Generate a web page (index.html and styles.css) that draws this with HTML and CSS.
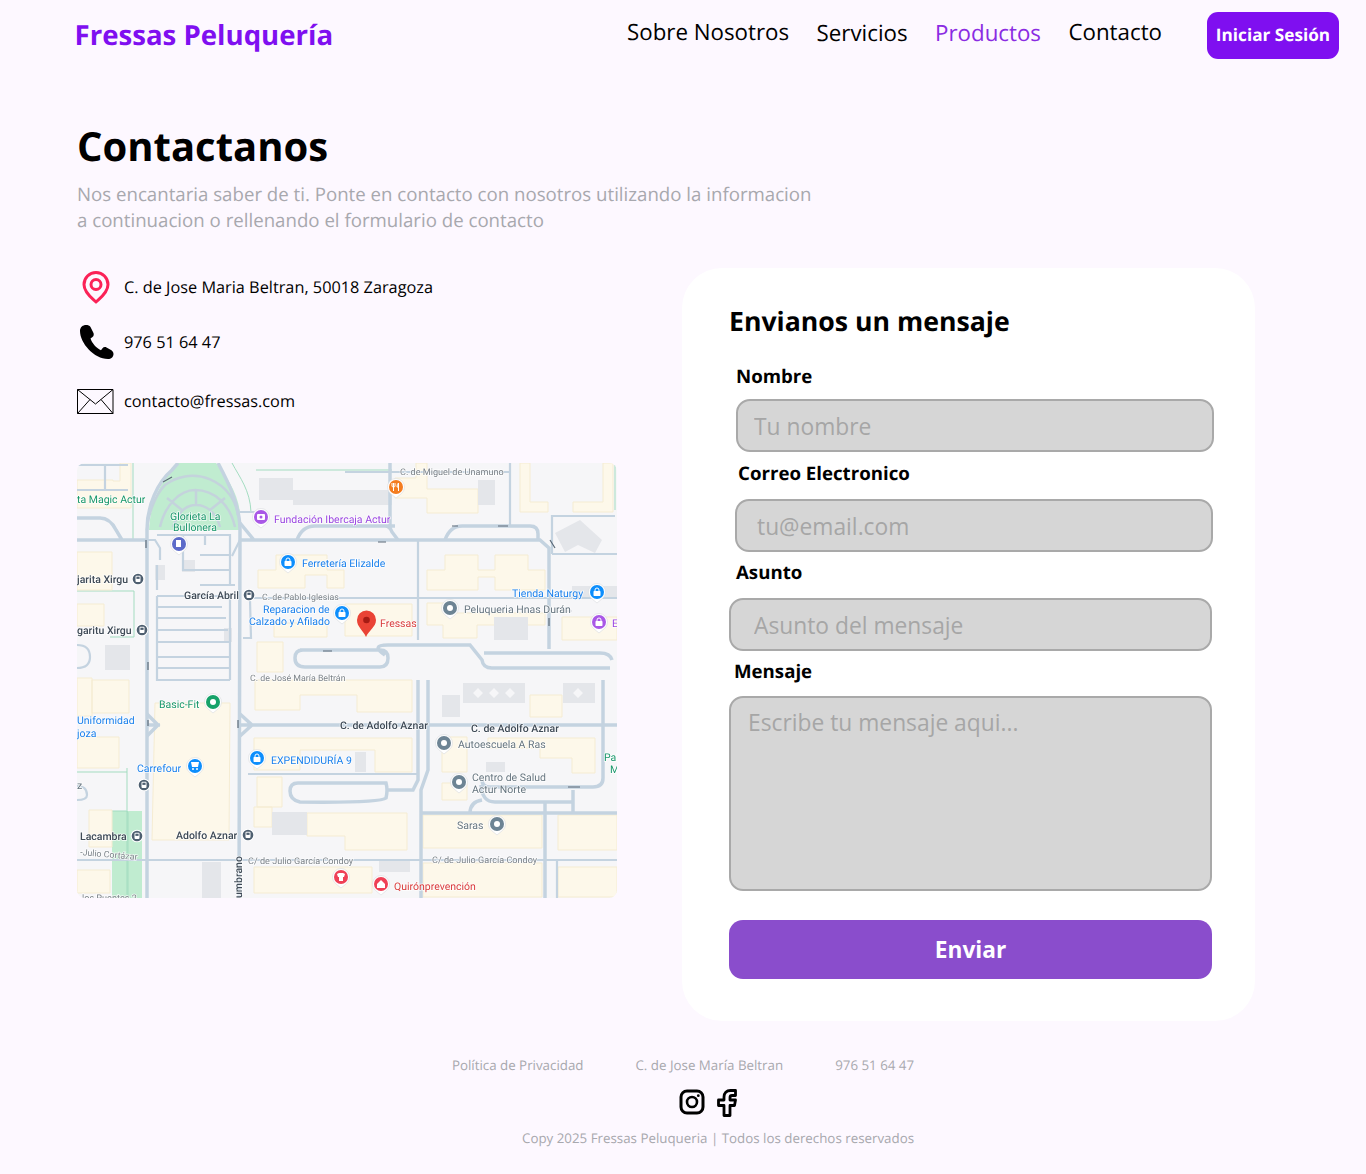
FILE: index.html
```html
<!DOCTYPE html>
<html lang="es">
<head>
    <meta charset="UTF-8">
    <meta name="viewport" content="width=device-width, initial-scale=1.0">
    <title>Fressas Peluquería</title>
    <link rel="stylesheet" href="styles.css">
</head>
<body>
    <header class="header">
        <a class="logo" href="#">Fressas Peluquería</a>
        <nav class="nav">
            <a href="#">Sobre Nosotros</a>
            <a class="nav-low" href="#">Servicios</a>
            <a class="nav-low active" href="#">Productos</a>
            <a href="#">Contacto</a>
        </nav>
        <a class="login" href="#">Iniciar Sesión</a>
    </header>

    <main class="main">
        <h1>Contactanos</h1>
        <p class="intro">Nos encantaria saber de ti. Ponte en contacto con nosotros utilizando la informacion<br>a continuacion o rellenando el formulario de contacto</p>

        <div class="columns">
            <section class="info">
                <ul class="contact-list">
                    <li class="row-address">
                        <span class="contact-icon">
                            <svg width="30" height="33" viewBox="0 0 30 33"><path d="M15 31 C12 28 3 22 3 13.5 A12 12 0 0 1 27 13.5 C27 22 18 28 15 31 Z" fill="none" stroke="#fb2257" stroke-width="3" stroke-linejoin="round"/><circle cx="15" cy="13.5" r="5" fill="none" stroke="#fb2257" stroke-width="3"/></svg>
                        </span>
                        C. de Jose Maria Beltran, 50018 Zaragoza
                    </li>
                    <li class="row-phone">
                        <span class="contact-icon">
                            <svg width="36" height="36" viewBox="0 0 36 36"><path d="M8 1 C5 1 2 3 2 7 C2 19 16 35 30 35 C33 35 35.500 33 35.500 30 C35.500 28 34.500 27 33 26 L28.500 23.500 C27 22.700 25.500 23 24.500 24.300 L23 26.300 C18 24 14 19 12.500 14.500 L14.500 13 C15.800 12 16 10.500 15.500 9 L12.500 3 C11.500 1.500 10 1 8 1 Z" fill="#000"/></svg>
                        </span>
                        976 51 64 47
                    </li>
                    <li class="row-mail">
                        <span class="contact-icon">
                            <svg width="37" height="25" viewBox="0 0 37 25"><path d="M.5 .5 H36 V24.500 H.5 Z M.5 .5 L18.500 15 L36 .5 M.5 24.500 L13 10.500 M36 24.500 L24 10.500" fill="none" stroke="#000" stroke-width="1"/></svg>
                        </span>
                        contacto@fressas.com
                    </li>
                </ul>

                <svg class="map" width="540" height="435" viewBox="77 463 540 435">
                    <defs>
                        <g id="pin">
                            <path d="M0 11 L-5.500 6.500 A8.500 8.500 0 1 1 5.500 6.500 Z" fill="#fff" stroke="#d8dade" stroke-width=".6"/>
                            <circle r="7"/>
                        </g>
                        <g id="lock">
                            <rect x="-3.500" y="-1" width="7" height="5" rx=".8" fill="#fff"/>
                            <path d="M-2 -1 V-2 A2 2 0 0 1 2 -2 V-1" fill="none" stroke="#fff" stroke-width="1"/>
                        </g>
                        <g id="bus">
                            <circle r="6.300" fill="#fff"/>
                            <circle r="5.300" fill="#4e5f70"/>
                            <rect x="-2.500" y="-3.300" width="5" height="6.300" rx="1" fill="#fff"/>
                            <rect x="-1.600" y="-2.300" width="3.200" height="2.200" fill="#4e5f70"/>
                        </g>
                    </defs>

                    <rect x="77" y="463" width="540" height="435" fill="#f6f6f8"/>

                    <!-- parque -->
                    <path class="green" d="M149 530 C150 505 160 482 172 471 L178 463 H216 C225 475 237 490 240 512 V530 Z"/>
                    <path class="green" d="M112 811 H142 V898 H112 Z"/>
                    <path class="park-line" d="M147 530 C148 515 155 495 165 485 A46 46 0 0 1 238 515 M160 527 C165 505 180 490 195 490 C215 490 230 505 235 527 M173 527 C178 512 186 505 196 505 C206 505 216 512 220 527 M196 490 V505 M167 498 L182 510 M225 498 L210 510"/>
                    <path class="green-line" d="M133 463 V540 M77 591 H134 V637 H110 M232 463 C240 478 250 490 251 512 M256 470 H392 M615 463 V510 M112 811 H126 Q128 811 128 813 V898 M127 768 V895 M77 772 H127"/>

                    <!-- edificios -->
                    <path class="bld" d="M77 480 H113 V481 H120 V463 H131 V508 H77 Z"/>
                    <path class="bld" d="M77 552 H112 V590 H77 Z M77 604 H104 V626 H77 Z"/>
                    <path class="bld" d="M92 680 H129 V713 H92 Z M77 737 H119 V768 H77 Z M77 678 H92 V716 H77 Z"/>
                    <path class="bld" d="M89 810 H112 V847 H89 Z M77 870 H110 V893 H77 Z"/>
                    <path class="bld" d="M155 703 H230 L229 840 H152 Z"/>
                    <path class="bld" d="M258 570 H276 V555 H327 V570 H344 V588 H327 V575 H305 V588 H258 Z"/>
                    <path class="bld" d="M274 623 H327 V637 H274 Z M257 642 H283 V672 H257 Z"/>
                    <path class="bld" d="M345 604 H412 V636 H345 Z"/>
                    <path class="bld" d="M255 680 H412 V712 H357 V695 H300 V710 H255 Z"/>
                    <path class="bld" d="M254 738 H412 V772 H375 V750 H300 V770 H254 Z"/>
                    <path class="bld" d="M257 777 H282 V807 H257 Z M254 807 H272 V827 H254 Z M307 813 H407 V850 H345 V836 H307 Z"/>
                    <path class="bld" d="M254 867 H372 V893 H254 Z M423 815 H455 V815 H542 V848 H423 Z M558 815 H617 V850 H558 Z M423 863 H542 V897 H423 Z M558 867 H617 V897 H558 Z"/>
                    <path class="bld" d="M427 570 H445 V555 H478 V570 H495 V555 H528 V570 H545 V590 H495 V577 H478 V590 H427 Z"/>
                    <path class="bld" d="M427 603 H445 V613 H545 V625 H477 V638 H443 V625 H427 Z M562 617 H617 V640 H562 Z"/>
                    <path class="bld" d="M395 478 H416 V463 H427 V489 H478 V513 H427 V498 H395 Z"/>
                    <path class="bld" d="M520 463 H530 V502 H548 V512 H520 Z M603 463 H613 V512 H573 V502 H603 Z"/>
                    <path class="bld" d="M442 737 H467 V772 H442 Z M442 783 H467 V800 H442 Z M488 738 H595 V773 H572 V758 H540 V748 H488 Z"/>
                    <path class="bld" d="M530 695 H562 V717 H530 Z"/>

                    <!-- bloques grises -->
                    <path class="gray" d="M259 478 H293 V500 H259 Z M293 490 H392 V505 H293 Z M478 480 H495 V505 H478 Z"/>
                    <path class="gray" d="M555 533 L580 520 L602 540 L595 553 L578 545 L565 552 Z"/>
                    <path class="gray" d="M494 617 H528 V640 H494 Z M105 645 H130 V670 H105 Z M560 610 H572 V586 H617 V598 H572 V612 H560 Z"/>
                    <path class="gray" d="M463 683 H525 V703 H463 Z M563 683 H595 V703 H563 Z M442 695 H460 V717 H442 Z"/>
                    <path class="gray" d="M272 812 H307 V835 H272 Z M202 862 H221 V898 H202 Z M379 860 H410 V872 H379 Z M355 752 H366 V772 H355 Z"/>
                    <path class="gray" d="M486 762 H505 V772 H486 Z"/>
                    <path class="gray" d="M155 565 H165 V580 H155 Z M182 560 H195 V572 H182 Z M224 628 H232 V642 H224 Z"/>
                    <path d="M478 688 L483 693 L478 698 L473 693 Z M494 688 L499 693 L494 698 L489 693 Z M510 688 L515 693 L510 698 L505 693 Z M578 688 L583 693 L578 698 L573 693 Z" fill="#f6f6f8"/>

                    <!-- calles -->
                    <path class="road" d="M147 898 V530 C147 505 158 482 172 470 L178 463 M239 898 L240 530 C240 505 228 482 218 463"/>
                    <path class="road" d="M77 540 H147 M240 540 H540 L549 548 V649 M240 523 L254 540 M77 518 H100 Q110 518 116 530 L122 540"/>
                    <path class="road" d="M297 540 Q302 526 315 526 H385 Q390 526 392 532 L398 540 M390 463 V526 M385 526 L395 526 M445 540 Q450 526 462 526 H530 Q538 526 538 534 V540"/>
                    <path class="road" d="M147 725 L160 725 M240 725 L252 725 H617 M147 714 L158 725 L147 736 M240 714 L252 725 L240 736"/>
                    <path class="road" d="M300 650 H380 Q388 650 388 658 Q388 667 380 667 H305 Q295 667 295 658 Q295 650 303 650 Z M388 645 H470 L482 660 Q483 668 492 668 H610 M484 653 H600 Q610 653 612 660 M388 645 Q370 645 385 655"/>
                    <path class="road" d="M290 791 Q290 783 298 783 H386 Q388 790 386 798 Q380 803 300 802 Q290 800 290 791 Z M388 790 H413 L418 780 V680 M428 680 V770 L421 790 V898 M421 813 H617"/>
                    <path class="road" d="M603 680 V778 Q603 787 593 787 H490 Q482 787 482 780 M481 785 Q482 802 495 802 H573 V813 M573 790 V802 M470 813 Q470 802 482 800 M545 802 V898"/>
                    <path class="road-thin" d="M510 463 V526 M345 472 H510 M552 554 V516 H615 M552 554 H617 M418 541 V640 M254 598 H617 M557 860 V898"/>
                    <path class="road-thin" d="M77 860 H617 M248 774 H418 M77 465 H128 M105 465 V490 M77 490 H128 M240 512 H255 M147 540 L155 540 L160 548 V560 M240 540 L232 556"/>
                    <path class="road-thin" d="M157 596 H230 V680 M157 596 V680 H230 M157 607 H222 M157 618 H226 M157 630 H228 M157 642 H230 M157 657 H230 M157 668 H230"/>
                    <path class="road-thin" d="M157 535 H230 V585 M183 535 V570 H230 M200 555 H230 M157 565 V590 M200 585 H235 M205 535 V545 M250 600 L251 638 H243"/>
                    <path class="road-thin" d="M77 645 Q90 645 90 657 Q90 668 77 668 M77 786 Q87 786 87 795 Q87 800 77 800"/>
                    <path class="arrow" d="M172 477 L163 482 M146 540 V548 M148 662 V670 M148 720 V726 M238 720 V728 M323 651 H332 M458 526 H452 M508 526 H498 M378 542 H386 M549 626 V618 M555 548 L550 540 M580 787 H568"/>

                    <!-- puntos -->
                    <use href="#pin" x="179" y="544" fill="#5c6bc9"/>
                    <rect x="176" y="540" width="5" height="7" fill="#fff"/>
                    <use href="#pin" x="261" y="517" fill="#a958e6"/>
                    <rect x="257" y="514" width="8" height="6" rx="1" fill="#fff"/>
                    <circle cx="261" cy="517" r="1.500" fill="#a958e6"/>
                    <use href="#pin" x="396" y="487" fill="#f47d20"/>
                    <path d="M393.500 483 V491 M392 483 V486 Q392 487 393.500 487 Q395 487 395 486 V483 M398.500 491 V483 Q397 484 397 487 H398.500" fill="none" stroke="#fff" stroke-width="1"/>
                    <use href="#pin" x="288" y="562" fill="#0d8efc"/><use href="#lock" x="288" y="562"/>
                    <use href="#pin" x="342" y="613" fill="#0d8efc"/><use href="#lock" x="342" y="613"/>
                    <use href="#pin" x="597" y="592" fill="#0d8efc"/><use href="#lock" x="597" y="592"/>
                    <use href="#pin" x="257" y="758" fill="#0d8efc"/><use href="#lock" x="257" y="758"/>
                    <use href="#pin" x="195" y="766" fill="#0d8efc"/>
                    <path d="M191 762 H199 L198 767 H192 Z" fill="#fff"/>
                    <circle cx="193" cy="769" r="1" fill="#fff"/><circle cx="197" cy="769" r="1" fill="#fff"/>
                    <use href="#pin" x="599" y="622" fill="#a958e6"/><use href="#lock" x="599" y="622"/>
                    <use href="#pin" x="213" y="702" fill="#16a269"/><circle cx="213" cy="702" r="3" fill="#fff"/>
                    <use href="#pin" x="450" y="608" fill="#6d8494"/><circle cx="450" cy="608" r="3" fill="#fff"/>
                    <use href="#pin" x="444" y="743" fill="#6d8494"/><circle cx="444" cy="743" r="3" fill="#fff"/>
                    <use href="#pin" x="459" y="782" fill="#6d8494"/><circle cx="459" cy="782" r="3" fill="#fff"/>
                    <use href="#pin" x="497" y="824" fill="#6d8494"/><circle cx="497" cy="824" r="3" fill="#fff"/>
                    <use href="#pin" x="341" y="877" fill="#ef4056"/>
                    <path d="M337 874 L339 873 H343 L345 874 L344 877 H343 V881 H339 V877 H338 Z" fill="#fff"/>
                    <use href="#pin" x="381" y="884" fill="#ef4056"/>
                    <path d="M377 884 L381 880 L385 884 V888 H377 Z" fill="#fff"/>
                    <use href="#bus" x="138" y="579"/>
                    <use href="#bus" x="249" y="595"/>
                    <use href="#bus" x="142" y="630"/>
                    <use href="#bus" x="144" y="785"/>
                    <use href="#bus" x="137" y="836"/>
                    <use href="#bus" x="248" y="835"/>
                    <path d="M366 637 C363 630 357 627 357 620 A9.500 9.500 0 0 1 376 620 C376 627 369 630 366 637 Z" fill="#ea4335"/>
                    <circle cx="366.500" cy="620" r="3.300" fill="#a61b14"/>

                    <!-- nombres -->
                    <text class="t-gray" x="400" y="475">C. de Miguel de Unamuno</text>
                    <text class="t-green" x="77" y="503">ta Magic Actur</text>
                    <text class="t-green" x="170" y="520">Glorieta La</text>
                    <text class="t-green" x="173" y="531">Bullonera</text>
                    <text class="t-purple" x="274" y="523">Fundación Ibercaja Actur</text>
                    <text class="t-blue" x="302" y="567">Ferretería Elizalde</text>
                    <text class="t-dark" x="77" y="583">jarita Xirgu</text>
                    <text class="t-dark" x="184" y="599">García Abril</text>
                    <text class="t-gray t-small" x="262" y="600">C. de Pablo Iglesias</text>
                    <text class="t-blue" x="263" y="613">Reparacion de</text>
                    <text class="t-blue" x="249" y="625">Calzado y Afilado</text>
                    <text class="t-red" x="380" y="627">Fressas</text>
                    <text class="t-blue" x="512" y="597">Tienda Naturgy</text>
                    <text class="t-slate" x="464" y="613">Peluqueria Hnas Durán</text>
                    <text class="t-purple" x="612" y="627">E</text>
                    <text class="t-dark" x="77" y="634">garitu Xirgu</text>
                    <text class="t-gray t-small" x="250" y="681">C. de José María Beltrán</text>
                    <text class="t-green" x="159" y="708">Basic-Fit</text>
                    <text class="t-dark" x="340" y="729">C. de Adolfo Aznar</text>
                    <text class="t-dark" x="471" y="732">C. de Adolfo Aznar</text>
                    <text class="t-blue" x="77" y="724">Uniformidad</text>
                    <text class="t-blue" x="77" y="737">joza</text>
                    <text class="t-blue" x="271" y="764">EXPENDIDURÍA 9</text>
                    <text class="t-slate" x="458" y="748">Autoescuela A Ras</text>
                    <text class="t-blue" x="137" y="772">Carrefour</text>
                    <text class="t-slate" x="472" y="781">Centro de Salud</text>
                    <text class="t-slate" x="472" y="793">Actur Norte</text>
                    <text class="t-green" x="604" y="761">Pal</text>
                    <text class="t-green" x="610" y="773">M</text>
                    <text class="t-slate" x="457" y="829">Saras</text>
                    <text class="t-slate" x="77" y="789">z</text>
                    <text class="t-dark" x="80" y="840">Lacambra</text>
                    <text class="t-dark" x="176" y="839">Adolfo Aznar</text>
                    <text class="t-gray t-small" x="80" y="855" transform="rotate(5 80 855)">-Julio Cortázar</text>
                    <text class="t-gray" x="248" y="864">C/ de Julio García Condoy</text>
                    <text class="t-gray" x="432" y="863">C/ de Julio García Condoy</text>
                    <text class="t-dark" x="242" y="898" transform="rotate(-90 242 898)">umbrano</text>
                    <text class="t-red" x="394" y="890">Quirónprevención</text>
                    <text class="t-gray" x="82" y="901">los Puentes 2</text>
                </svg>
            </section>

            <section class="card">
                <h2>Envianos un mensaje</h2>
                <form class="form">
                    <label class="label label-name" for="nombre">Nombre</label>
                    <input class="field field-name" id="nombre" type="text" placeholder="Tu nombre">

                    <label class="label label-email" for="correo">Correo Electronico</label>
                    <input class="field field-email" id="correo" type="email" placeholder="tu@email.com">

                    <label class="label label-subject" for="asunto">Asunto</label>
                    <input class="field field-subject" id="asunto" type="text" placeholder="Asunto del mensaje">

                    <label class="label label-message" for="mensaje">Mensaje</label>
                    <textarea class="field field-message" id="mensaje" placeholder="Escribe tu mensaje aqui..."></textarea>

                    <button class="send" type="button">Enviar</button>
                </form>
            </section>
        </div>
    </main>

    <footer class="footer">
        <div class="footer-links">
            <a href="#">Política de Privacidad</a>
            <a href="#">C. de Jose María Beltran</a>
            <a href="#">976 51 64 47</a>
        </div>
        <div class="social">
            <svg width="26" height="26" viewBox="0 0 26 26"><rect x="2" y="2" width="22" height="22" rx="6" fill="none" stroke="#000" stroke-width="3"/><circle cx="13" cy="13" r="5" fill="none" stroke="#000" stroke-width="2.600"/><circle cx="19.300" cy="6.700" r="1.400" fill="#000"/></svg>
            <svg width="22" height="28" viewBox="0 0 22 28"><path d="M8 26.500 V16.500 H2.500 V11 H8 V8 C8 4 10.500 1.500 14.500 1.500 H19.500 V6.500 H16 C15 6.500 14 7.200 14 8.500 V11 H19.500 L18.500 16.500 H14 V26.500 Z" fill="none" stroke="#000" stroke-width="2.800" stroke-linejoin="round"/></svg>
        </div>
        <p class="copy">Copy 2025 Fressas Peluqueria | Todos los derechos reservados</p>
    </footer>
</body>
</html>
```

FILE: styles.css
```css
* {
    box-sizing: border-box;
}
body {
    margin: 0;
    height: 1174px;
    background-color: #fdf8ff;
    color: #000;
    font-family: "Open Sans", sans-serif;
    text-rendering: geometricPrecision;
    overflow: hidden;
}
a {
    text-decoration: none;
    color: inherit;
}

/* header */
.header {
    display: flex;
    align-items: flex-start;
    height: 59px;
    padding: 12px 27px 0 74.5px;
}
.logo {
    margin-top: 4px;
    font-size: 27.6px;
    line-height: 38px;
    font-weight: 700;
    color: #7f0ff0;
}
.nav {
    display: flex;
    gap: 27.5px;
    margin-left: auto;
    font-size: 22.3px;
    line-height: 30px;
    margin-top: 5px;
}
.nav-low {
    margin-top: 1px;
}
.nav .active {
    color: #8a2be2;
}
.login {
    margin-left: 45px;
    width: 132px;
    height: 47px;
    border-radius: 11px;
    background-color: #7f0ff0;
    color: #fff;
    font-size: 17.2px;
    font-weight: 700;
    line-height: 47px;
    text-align: center;
}

/* main */
.main {
    padding: 0 0 0 77px;
}
h1 {
    margin: 59px 0 0;
    font-size: 40px;
    line-height: 55px;
    font-weight: 700;
}
.intro {
    margin: 9px 0 0;
    font-size: 18.67px;
    line-height: 26px;
    color: #a8a8ae;
}
.columns {
    display: flex;
    align-items: flex-start;
    gap: 65px;
    margin-top: 34px;
}
.info {
    width: 540px;
}
.contact-list {
    list-style-type: none;
    margin: 0;
    padding: 0;
}
.contact-list li {
    display: flex;
    align-items: center;
    font-size: 16.3px;
    line-height: 22px;
}
.contact-icon {
    display: flex;
    justify-content: center;
    width: 37px;
    margin-right: 10px;
}
.row-address {
    height: 38px;
}
.row-phone {
    height: 38px;
    margin-top: 17px;
}
.row-mail {
    height: 26px;
    margin-top: 27px;
}
.map {
    display: block;
    margin-top: 49px;
    border-radius: 8px;
    filter: blur(0.35px);
}

/* map drawing */
.green {
    fill: #c0ecd0;
}
.park-line {
    fill: none;
    stroke: #c4d3dc;
    stroke-width: 2.5;
}
.green-line {
    fill: none;
    stroke: #a3dcc0;
    stroke-width: 1;
}
.bld {
    fill: #fdf8ea;
    stroke: #f5ecd2;
    stroke-width: 1;
}
.gray {
    fill: #e4e6ea;
}
.road,
.road-thin {
    fill: none;
    stroke: #c4d3e0;
}
.road {
    stroke-width: 3.5;
}
.road-thin {
    stroke-width: 2.2;
}
.arrow {
    fill: none;
    stroke: #5d6b78;
    stroke-width: 1.2;
}
.map text {
    font-family: Roboto, sans-serif;
    font-size: 10.5px;
    paint-order: stroke;
    stroke: #fff;
    stroke-width: 1.5px;
    stroke-opacity: 0.8;
}
.map .t-gray {
    font-size: 9.1px;
}
.map .t-small {
    font-size: 8.8px;
}
.t-gray {
    fill: #7b8288;
}
.t-dark {
    fill: #3e4a56;
    font-weight: 500;
}
.t-slate {
    fill: #66757f;
}
.t-green {
    fill: #18976a;
}
.t-blue {
    fill: #1a80ec;
}
.t-purple {
    fill: #9a45e0;
}
.t-red {
    fill: #d93a3a;
}

/* form card */
.card {
    width: 573px;
    height: 753px;
    padding: 35px 0 0 47px;
    border-radius: 40px;
    background-color: #fff;
}
h2 {
    margin: 0;
    font-size: 26.67px;
    line-height: 36px;
    font-weight: 700;
}
.form {
    display: flex;
    flex-direction: column;
    align-items: flex-start;
}
.label {
    font-size: 18.67px;
    line-height: 26px;
    font-weight: 700;
}
.label-name {
    margin: 25px 0 0 7px;
}
.label-email {
    margin: 9px 0 0 9px;
}
.label-subject {
    margin: 8px 0 0 7px;
}
.label-message {
    margin: 8px 0 0 5px;
}
.field {
    display: block;
    height: 53px;
    border: 2px solid #a9a9a9;
    border-radius: 14px;
    background-color: #d6d6d6;
    font-family: "Open Sans", sans-serif;
    font-size: 22.8px;
    color: #333;
}
.field::placeholder {
    color: #a6a6a6;
    opacity: 1;
}
.field-name {
    width: 478px;
    margin: 9px 0 0 7px;
    padding: 2px 16px 0;
}
.field-email {
    width: 478px;
    margin: 12px 0 0 6px;
    padding: 2px 20px 0;
}
.field-subject {
    width: 483px;
    margin: 12px 0 0;
    padding: 2px 23px 0;
}
.field-message {
    width: 483px;
    height: 195px;
    margin: 11px 0 0;
    padding: 7px 17px;
    line-height: 36px;
    resize: none;
}
.send {
    width: 483px;
    height: 59px;
    margin-top: 29px;
    border: none;
    border-radius: 14px;
    background-color: #8a4dcc;
    color: #fff;
    font-family: "Open Sans", sans-serif;
    font-size: 22.7px;
    font-weight: 700;
    cursor: pointer;
}

/* footer */
.footer {
    margin-top: 35px;
    color: #a8a8ae;
    font-size: 13.33px;
}
.footer-links {
    display: flex;
    justify-content: center;
    gap: 52px;
    line-height: 18px;
}
.social {
    display: flex;
    justify-content: center;
    gap: 11px;
    margin: 15px 0 0 51px;
}
.copy {
    margin: 12px 0 0 522px;
    line-height: 18px;
}
```
